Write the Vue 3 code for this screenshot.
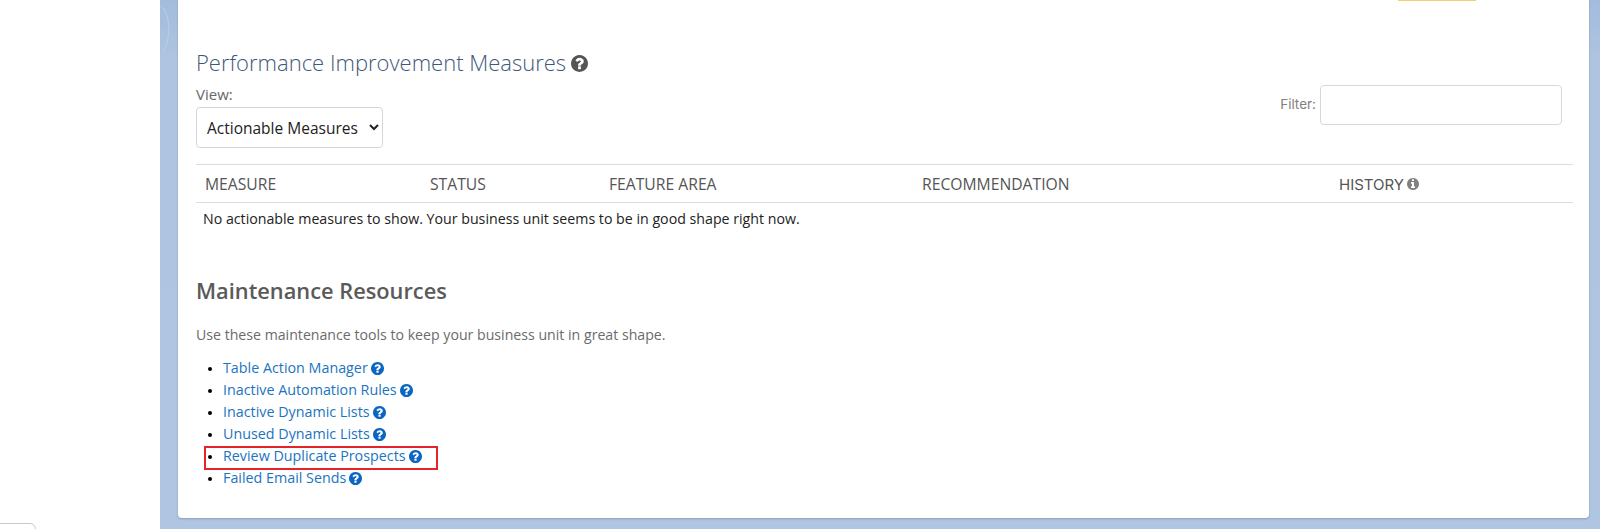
<template>
  <div class="page">
    <aside class="blank"></aside>
    <main class="backdrop">
      <svg class="swirl" viewBox="0 0 18 60" aria-hidden="true">
        <path d="M1 6C10 14 12 36 3 52" fill="none" stroke="#bccfe6" stroke-width="1" />
      </svg>
      <section class="card">
        <div class="flag"></div>
        <div class="measures-top">
          <div>
            <h2 class="title">
              Performance Improvement Measures
              <svg class="icon icon-title" viewBox="128 128 1536 1536"><path :d="questionPath" /></svg>
            </h2>
            <label class="view-label" for="view">View:</label>
            <select id="view" class="view-select">
              <option>Actionable Measures</option>
            </select>
          </div>
          <div class="filter">
            <label for="filter">Filter:</label>
            <input id="filter" type="text" />
          </div>
        </div>

        <table class="measures">
          <thead>
            <tr>
              <th v-for="col in columns" :key="col.label" :style="{ width: col.width + 'px' }">
                <span :class="{ wide: col.info }">{{ col.label }}</span>
                <svg v-if="col.info" class="icon icon-info" viewBox="128 128 1536 1536"><path :d="infoPath" /></svg>
              </th>
            </tr>
          </thead>
          <tbody>
            <tr>
              <td colspan="5">No actionable measures to show. Your business unit seems to be in good shape right now.</td>
            </tr>
          </tbody>
        </table>

        <h3 class="subtitle">Maintenance Resources</h3>
        <p class="desc">Use these maintenance tools to keep your business unit in great shape.</p>
        <ul class="tools">
          <li v-for="tool in tools" :key="tool">
            <a href="#">{{ tool }}</a>
            <svg class="icon icon-help" viewBox="128 128 1536 1536"><path :d="questionPath" /></svg>
            <span v-if="tool === 'Review Duplicate Prospects'" class="highlight"></span>
          </li>
        </ul>
      </section>
    </main>
    <div class="corner-box"></div>
  </div>
</template>

<script setup>
const questionPath = 'M1024 1376v-192q0-14-9-23t-23-9h-192q-14 0-23 9t-9 23v192q0 14 9 23t23 9h192q14 0 23-9t9-23zm256-672q0-88-55.5-163t-138.5-116-170-41q-243 0-371 213-15 24 8 42l132 100q7 6 19 6 16 0 25-12 53-68 86-92 34-24 86-24 48 0 85.5 26t37.5 59q0 38-20 61t-68 45q-63 28-115.5 86.5t-52.5 125.5v36q0 14 9 23t23 9h192q14 0 23-9t9-23q0-19 21.5-49.5t54.5-49.5q32-18 49-28.5t46-35 44.5-48 28-60.5 12.5-81zm384 192q0 209-103 385.5t-279.5 279.5-385.5 103-385.5-103-279.5-279.5-103-385.5 103-385.5 279.5-279.5 385.5-103 385.5 103 279.5 279.5 103 385.5z'
const infoPath = 'M1152 1376v-160q0-14-9-23t-23-9h-96v-512q0-14-9-23t-23-9h-320q-14 0-23 9t-9 23v160q0 14 9 23t23 9h96v320h-96q-14 0-23 9t-9 23v160q0 14 9 23t23 9h448q14 0 23-9t9-23zm-128-896v-160q0-14-9-23t-23-9h-192q-14 0-23 9t-9 23v160q0 14 9 23t23 9h192q14 0 23-9t9-23zm640 416q0 209-103 385.5t-279.5 279.5-385.5 103-385.5-103-279.5-279.5-103-385.5 103-385.5 279.5-279.5 385.5-103 385.5 103 279.5 279.5 103 385.5z'

const columns = [
  { label: 'MEASURE', width: 225 },
  { label: 'STATUS', width: 179 },
  { label: 'FEATURE AREA', width: 313 },
  { label: 'RECOMMENDATION', width: 417 },
  { label: 'HISTORY', width: 243, info: true }
]

const tools = [
  'Table Action Manager',
  'Inactive Automation Rules',
  'Inactive Dynamic Lists',
  'Unused Dynamic Lists',
  'Review Duplicate Prospects',
  'Failed Email Sends'
]
</script>

<style>
html, body {
  margin: 0;
  background: #fff;
}
</style>

<style scoped>
.page {
  position: relative;
  display: flex;
  width: 1600px;
  height: 529px;
  overflow: hidden;
  font-family: "Open Sans", "Liberation Sans", sans-serif;
  background: #fff;
}

.blank {
  width: 160px;
  flex: none;
}

.backdrop {
  position: relative;
  flex: 1;
  min-width: 0;
  padding: 0 11px 11px 18px;
  box-sizing: border-box;
  background: linear-gradient(180deg, #a3bcdd 0, #aec4e0 60px, #b0c5e1 100%);
}

.swirl {
  position: absolute;
  left: 0;
  top: 0;
  width: 18px;
  height: 60px;
}

.card {
  position: relative;
  height: 518px;
  box-sizing: border-box;
  padding: 49px 16px 0 18px;
  background: #fff;
  border-radius: 0 0 4px 4px;
  box-shadow: 0 1px 2px rgba(70, 80, 100, 0.35);
}

.flag {
  position: absolute;
  top: 0;
  left: 1220px;
  width: 78px;
  height: 1px;
  background: #f2cf6e;
}

.measures-top {
  display: flex;
  justify-content: space-between;
  align-items: flex-start;
  height: 115px;
  padding-right: 11px;
}

.title {
  margin: 0;
  font-size: 22px;
  line-height: 27px;
  font-weight: 300;
  color: #3f5878;
}

.icon {
  fill: currentColor;
  vertical-align: middle;
}

.icon-title {
  width: 17px;
  height: 17px;
  margin: -3px 0 0 -1px;
  color: #555;
}

.view-label {
  display: block;
  margin-top: 9px;
  font-size: 15px;
  line-height: 18px;
  color: #666;
}

.view-select {
  display: block;
  width: 187px;
  height: 41px;
  margin-top: 4px;
  padding: 0 6px;
  font-family: inherit;
  font-size: 15.5px;
  color: #222;
  background: #fff;
  border: 1px solid #d6d6d6;
  border-radius: 4px;
}

.filter {
  display: flex;
  align-items: center;
  gap: 4px;
  margin-top: 36px;
  font-family: Inter, sans-serif;
  font-size: 13.5px;
  color: #808080;
}

.filter label {
  margin-top: -2px;
}

.filter input {
  width: 242px;
  height: 40px;
  box-sizing: border-box;
  background: #fff;
  border: 1px solid #d8d8d8;
  border-radius: 4px;
}

.measures {
  width: 1377px;
  border-collapse: collapse;
  table-layout: fixed;
}

.measures th {
  height: 38px;
  box-sizing: border-box;
  padding: 0 9px;
  font-size: 15.7px;
  font-weight: 400;
  text-align: left;
  color: #555;
  border-top: 1px solid #dcdcdc;
  border-bottom: 1px solid #dcdcdc;
}

.measures th .wide {
  font-family: Inter, sans-serif;
  font-size: 15px;
}

.icon-info {
  width: 12px;
  height: 12px;
  margin: -2px 0 0 3px;
  color: #808080;
}

.measures td {
  padding: 6px 7px;
  font-size: 14.2px;
  line-height: 20px;
  color: #222;
}

.subtitle {
  margin: 42px 0 0;
  font-size: 21.8px;
  line-height: 28px;
  font-weight: 600;
  color: #5a5a5a;
}

.desc {
  margin: 20px 0 0;
  font-size: 14.15px;
  line-height: 20px;
  color: #6b6b6b;
}

.tools {
  margin: 12px 0 0;
  padding: 0 0 0 27px;
  list-style: disc;
}

.tools li {
  position: relative;
  height: 22px;
  font-size: 14.3px;
  line-height: 22px;
}

.tools li::marker {
  font-size: 12px;
}

.tools a {
  color: #1b74c0;
  text-decoration: none;
}

.icon-help {
  width: 13px;
  height: 13px;
  margin: -2px 0 0 3px;
  color: #0a66c2;
}

.highlight {
  position: absolute;
  left: -19px;
  top: 1px;
  width: 234px;
  height: 24px;
  box-sizing: border-box;
  border: 2px solid #e3252b;
}

.corner-box {
  position: absolute;
  left: -6px;
  bottom: -8px;
  width: 42px;
  height: 14px;
  box-sizing: border-box;
  border: 1px solid #c8c8c8;
  border-radius: 6px;
  background: #fff;
}
</style>
